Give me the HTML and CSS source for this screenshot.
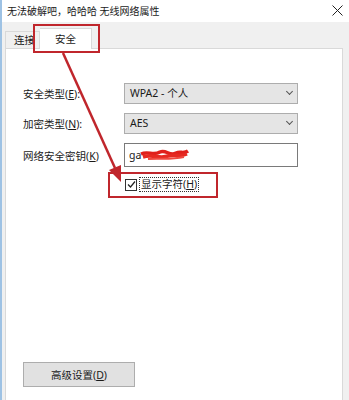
FILE: index.html
```html
<!DOCTYPE html>
<html lang="zh-CN">
<head>
  <meta charset="UTF-8">
  <title>无线网络属性</title>
  <link rel="stylesheet" href="styles.css">
</head>
<body>
  <div class="window">
    <!-- Title bar -->
    <div class="titlebar">
      <span class="title">无法破解吧，哈哈哈 无线网络属性</span>
      <svg class="close" width="11" height="11" viewBox="0 0 11 11">
        <path d="M0.5 0.5 L10.5 10.5 M10.5 0.5 L0.5 10.5" stroke="#222" stroke-width="1"/>
      </svg>
    </div>

    <!-- Tabs -->
    <div class="tabs">
      <div class="tab">连接</div>
      <div class="tab active">安全</div>
    </div>

    <!-- Tab panel -->
    <div class="panel">
      <div class="form">
        <label>安全类型(<u>E</u>):</label>
        <div class="select">WPA2 - 个人<span class="chevron"></span></div>

        <label>加密类型(<u>N</u>):</label>
        <div class="select">AES<span class="chevron"></span></div>

        <label>网络安全密钥(<u>K</u>)</label>
        <div class="input">
          ga
          <svg class="scribble" width="50" height="14" viewBox="0 0 50 14">
            <path d="M1 6 C8 3 14 8 20 4 C26 1 30 9 36 5 C40 3 44 6 48 3" stroke="#e0201c" stroke-width="3.5" fill="none"/>
            <path d="M3 9 C12 6 20 11 28 8 C34 6 40 9 47 6" stroke="#e62a22" stroke-width="3.5" fill="none"/>
            <path d="M8 11 C18 10 30 12 44 9" stroke="#f04a40" stroke-width="2" fill="none"/>
          </svg>
        </div>
      </div>

      <div class="check-row">
        <span class="checkbox">
          <svg width="9" height="9" viewBox="0 0 9 9">
            <path d="M1 4.5 L3.5 7 L8 1.5" stroke="#222" stroke-width="1.2" fill="none"/>
          </svg>
        </span>
        <span class="check-label">显示字符(<u>H</u>)</span>
      </div>

      <button class="btn">高级设置(<u>D</u>)</button>
    </div>

    <!-- annotations -->
    <div class="mark mark-tab"></div>
    <div class="mark mark-check"></div>
    <svg class="arrow" width="349" height="400" viewBox="0 0 349 400">
      <line x1="63" y1="53" x2="115" y2="168" stroke="#c0262c" stroke-width="2.5"/>
      <polygon points="121,182 109,170 121,165" fill="#c0262c"/>
    </svg>
  </div>
</body>
</html>
```

FILE: styles.css
```css
body {
  margin: 0;
  background: #f0f0f0;
  font-family: "Noto Sans", "Noto Sans CJK SC", sans-serif;
  font-size: 10.5px;
  color: #1a1a1a;
  overflow: hidden;
}

.window {
  position: relative;
  width: 349px;
  height: 400px;
  border-left: 2px solid #9ec2e4;
  box-sizing: border-box;
}

.titlebar {
  height: 22px;
  background: #fff;
  display: flex;
  align-items: center;
  justify-content: space-between;
  padding: 0 6px 0 5px;
}

.title {
  font-size: 10px;
  line-height: 22px;
  margin-top: -1px;
}

.close {
  margin-bottom: 2px;
}

.tabs {
  height: 26px;
  display: flex;
  align-items: flex-end;
  padding-left: 3px;
}

.tab {
  height: 16px;
  line-height: 16px;
  padding: 0 4px 0 8px;
  border: 1px solid #d9d9d9;
  border-bottom: none;
  background: #f0f0f0;
  white-space: nowrap;
}

.tab.active {
  height: 20px;
  line-height: 20px;
  width: 22px;
  padding: 0 14px 0 15px;
  background: #fff;
  border-left: none;
  position: relative;
  top: 1px;
}

.panel {
  margin: 0 6px 0 3px;
  height: 360px;
  background: #fff;
  border: 1px solid #d9d9d9;
  padding: 0 0 0 17px;
  display: flex;
  flex-direction: column;
}

.form {
  margin-top: 34px;
  display: grid;
  grid-template-columns: 101px 174px;
  row-gap: 9px;
  align-items: center;
}

.select {
  height: 19px;
  line-height: 19px;
  background: #e5e5e5;
  border: 1px solid #adadad;
  padding-left: 5px;
  position: relative;
}

.chevron {
  position: absolute;
  right: 5px;
  top: 5px;
  width: 4px;
  height: 4px;
  border-right: 1px solid #555;
  border-bottom: 1px solid #555;
  transform: rotate(45deg);
}

.input {
  height: 22px;
  line-height: 22px;
  border: 1px solid #7a7a7a;
  padding-left: 4px;
  display: flex;
  align-items: center;
}

.scribble {
  margin-left: -1px;
}

.check-row {
  margin: 10px 0 0 102px;
  display: flex;
  align-items: center;
  gap: 2px;
}

.checkbox {
  width: 10px;
  height: 10px;
  border: 1px solid #333;
  display: flex;
  align-items: center;
  justify-content: center;
}

.check-label {
  border: 1px dotted #333;
  padding: 0 1px;
  line-height: 13px;
}

.btn {
  margin-top: 170px;
  width: 112px;
  height: 25px;
  background: #e1e1e1;
  border: 1px solid #adadad;
  font-family: inherit;
  font-size: 10.5px;
  color: #1a1a1a;
  padding: 0;
}

.mark {
  position: absolute;
  border: 2px solid #c0262c;
}

.mark-tab {
  left: 31px;
  top: 24px;
  width: 63px;
  height: 25px;
}

.mark-check {
  left: 106px;
  top: 172px;
  width: 106px;
  height: 22px;
}

.arrow {
  position: absolute;
  left: -2px;
  top: 0;
  pointer-events: none;
}
```
